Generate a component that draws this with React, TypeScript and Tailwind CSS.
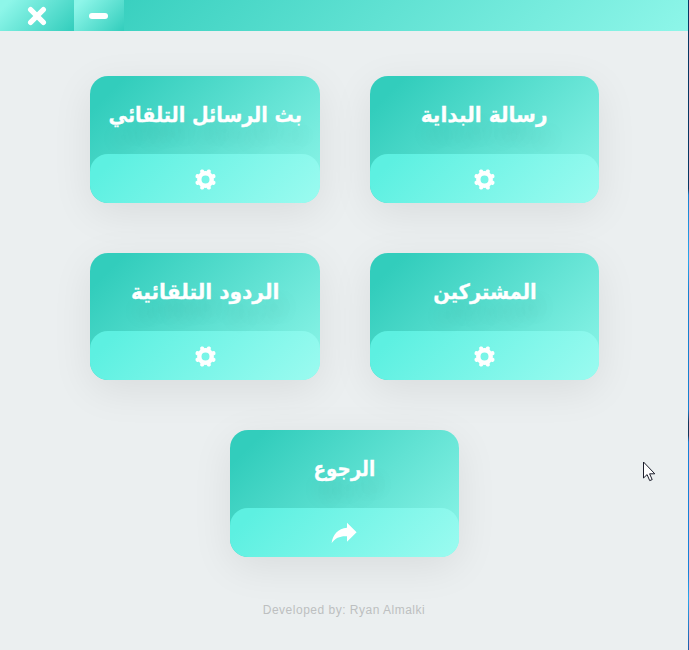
import React from "react";

const TEETH = [22.5, 67.5, 112.5, 157.5, 202.5, 247.5, 292.5, 337.5];

function Gear() {
  return (
    <svg width="23" height="23" viewBox="-11.5 -11.5 23 23" fill="none" stroke="white">
      <circle r="6.2" strokeWidth="4.4" />
      {TEETH.map((a) => (
        <path key={a} d="M0 -7.7V-8.6" strokeWidth="4.2" strokeLinecap="round" transform={`rotate(${a})`} />
      ))}
    </svg>
  );
}

function Forward() {
  return (
    <svg className="-translate-x-px" width="26" height="22" viewBox="0 0 26 22" fill="white">
      <path d="M16 .8L25.6 10.3L16 19.8V14.2C9.2 13.8 4.6 15.6.6 21.2C1.8 12.6 7 6.6 16 5.8Z" />
    </svg>
  );
}

type CardProps = { title: string; width: string; scale: string; back?: boolean };

function Card({ title, width, scale, back }: CardProps) {
  return (
    <button
      className={`${width} flex h-[127px] flex-col overflow-hidden rounded-[18px] bg-linear-[135deg,#32cdbc_10%,#8ef6e9] shadow-[0_10px_40px_rgba(0,0,0,0.08)]`}
    >
      <span
        dir="rtl"
        className="flex h-[78px] w-full items-center justify-center whitespace-nowrap pt-[2px] text-[21px] font-bold text-white [-webkit-text-stroke:0.3px_white] [text-shadow:5px_16px_20px_rgba(0,0,0,0.13)]"
      >
        <span className={scale}>{title}</span>
      </span>
      <span className="flex h-[49px] w-full items-center justify-center rounded-[18px] bg-linear-[135deg,#5df0e1_10%,#9bfbf0] pt-px">
        {back ? <Forward /> : <Gear />}
      </span>
    </button>
  );
}

export default function App() {
  return (
    <div className="flex h-[650px] w-[689px] overflow-hidden bg-[#ebeff0] font-['DejaVu_Sans',sans-serif]">
      <main className="flex w-[688px] flex-col">
        <header className="flex h-[31px] bg-linear-[135deg,#32cdbc_10%,#8ef6e9]">
          <button aria-label="Close" className="flex w-[74px] items-center justify-center bg-linear-[135deg,#8ef6e9_10%,#32cdbc]">
            <svg width="20" height="20" viewBox="0 0 20 20" stroke="white" strokeWidth="5.2" strokeLinecap="round">
              <path d="M3.6 3.6L16.4 16.4M16.4 3.6L3.6 16.4" />
            </svg>
          </button>
          <button aria-label="Minimize" className="flex w-[50px] items-center justify-center bg-linear-[135deg,#8ef6e9_10%,#32cdbc] pr-px">
            <span className="h-[6px] w-[19px] rounded-full bg-white" />
          </button>
        </header>
        <section className="flex flex-col gap-[50px] pt-[45px]">
          <div className="flex gap-[50px] pl-[90px]">
            <Card title="بث الرسائل التلقائي" width="w-[230px]" scale="scale-x-[0.91]" />
            <Card title="رسالة البداية" width="w-[229px]" scale="scale-x-[0.96]" />
          </div>
          <div className="flex gap-[50px] pl-[90px]">
            <Card title="الردود التلقائية" width="w-[230px]" scale="scale-x-[0.96]" />
            <Card title="المشتركين" width="w-[229px]" scale="scale-x-[0.925]" />
          </div>
          <div className="flex pl-[230px]">
            <Card title="الرجوع" width="w-[229px]" scale="scale-x-[0.87]" back />
          </div>
        </section>
        <footer className="mt-[44px] text-center font-['Liberation_Sans',Arial,sans-serif] text-[12px] leading-[18px] tracking-[0.5px] text-[#bdbfc0]">
          Developed by: Ryan Almalki
        </footer>
      </main>
      <div className="w-px bg-linear-[180deg,#063764_0%,#063764_29%,#1680d0_30%,#29a6ee_40%,#1680d0_45%,#1680d0_63%,#12365c_65%,#12365c_67%,#1680d8_68%,#1680d8_88%,#29a6ee_92%,#1e5ba8_100%]" />
      <svg className="absolute left-[643px] top-[461px]" width="13" height="21" viewBox="0 0 13 21">
        <path d="M.5 1v16l3.6-3.4 2.6 6 2.5-1-2.6-5.8h5.2z" fill="white" stroke="#1b1d2b" />
      </svg>
    </div>
  );
}
